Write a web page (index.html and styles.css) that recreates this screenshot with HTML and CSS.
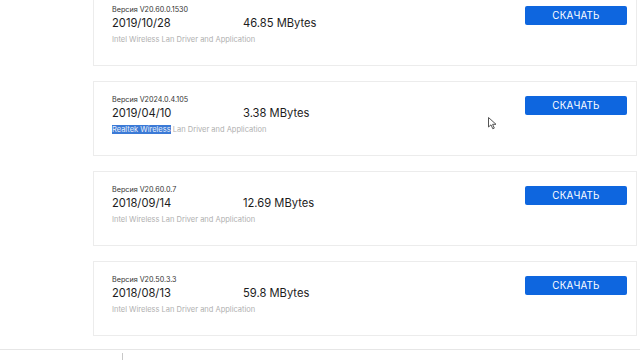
FILE: index.html
```html
<!doctype html>
<html>
	<head>
		<meta charset="utf-8">
		<title>Драйверы</title>
		<link rel="stylesheet" href="styles.css">
	</head>
	<body>
		<div class="list">
			<div class="card">
				<div class="info">
					<div class="ver">Версия V20.60.0.1530</div>
					<div class="row"><span class="date">2019/10/28</span><span class="size">46.85 MBytes</span></div>
					<div class="desc">Intel Wireless Lan Driver and Application</div>
				</div>
				<button class="btn">СКАЧАТЬ</button>
			</div>
			<div class="card">
				<div class="info">
					<div class="ver">Версия V2024.0.4.105</div>
					<div class="row"><span class="date">2019/04/10</span><span class="size">3.38 MBytes</span></div>
					<div class="desc"><span class="sel">Realtek Wireless</span> Lan Driver and Application</div>
				</div>
				<button class="btn">СКАЧАТЬ</button>
			</div>
			<div class="card">
				<div class="info">
					<div class="ver">Версия V20.60.0.7</div>
					<div class="row"><span class="date">2018/09/14</span><span class="size">12.69 MBytes</span></div>
					<div class="desc">Intel Wireless Lan Driver and Application</div>
				</div>
				<button class="btn">СКАЧАТЬ</button>
			</div>
			<div class="card">
				<div class="info">
					<div class="ver">Версия V20.50.3.3</div>
					<div class="row"><span class="date">2018/08/13</span><span class="size">59.8 MBytes</span></div>
					<div class="desc">Intel Wireless Lan Driver and Application</div>
				</div>
				<button class="btn">СКАЧАТЬ</button>
			</div>
		</div>
		<div class="foot">
			<div class="tick"></div>
		</div>
		<svg class="pointer" width="9" height="13" viewBox="0 0 9 13">
			<path d="M0.5 0.5 L0.5 10 L3 7.8 L4.8 11.8 L6.3 11.1 L4.6 7.3 L8 7.3 Z" fill="#fff" stroke="#555" stroke-width="1"/>
		</svg>
	</body>
</html>
```
FILE: styles.css
```css
* {
	margin: 0;
	padding: 0;
	box-sizing: border-box;
}
body {
	background-color: #fff;
	font-family: Inter, "Noto Sans", sans-serif;
	color: #222;
	width: 640px;
	height: 360px;
	overflow: hidden;
	position: relative;
}
.list {
	margin: -9px 0 0 93px;
	width: 544px;
	display: flex;
	flex-direction: column;
	gap: 15px;
}
.card {
	height: 75px;
	border: 1px solid #ececec;
	display: flex;
	justify-content: space-between;
	align-items: flex-start;
	padding: 14px 9px 0 18px;
}
.ver {
	margin-top: -1px;
	font-size: 7.2px;
	line-height: 10px;
	color: #333;
}
.row {
	display: flex;
	font-size: 11.2px;
	line-height: 14px;
	margin-top: 1px;
	color: #1c1c1c;
}
.date {
	width: 131px;
}
.desc {
	margin-top: 5px;
	font-size: 7.5px;
	line-height: 10px;
	color: #b0b0b0;
}
.sel {
	background-color: #3b7ad6;
	color: #eaf0fb;
}
.btn {
	width: 102px;
	height: 19px;
	border: 0;
	border-radius: 2px;
	background-color: #0e66df;
	color: #fff;
	font-family: Inter, "Noto Sans", sans-serif;
	font-size: 9.8px;
	letter-spacing: 0.2px;
}
.foot {
	margin-top: 13px;
	border-top: 1px solid #e6e6e6;
	height: 20px;
	padding: 3px 0 0 122px;
}
.tick {
	width: 1px;
	height: 10px;
	background-color: #c8c8c8;
}
.pointer {
	position: absolute;
	left: 488px;
	top: 117px;
}
```
